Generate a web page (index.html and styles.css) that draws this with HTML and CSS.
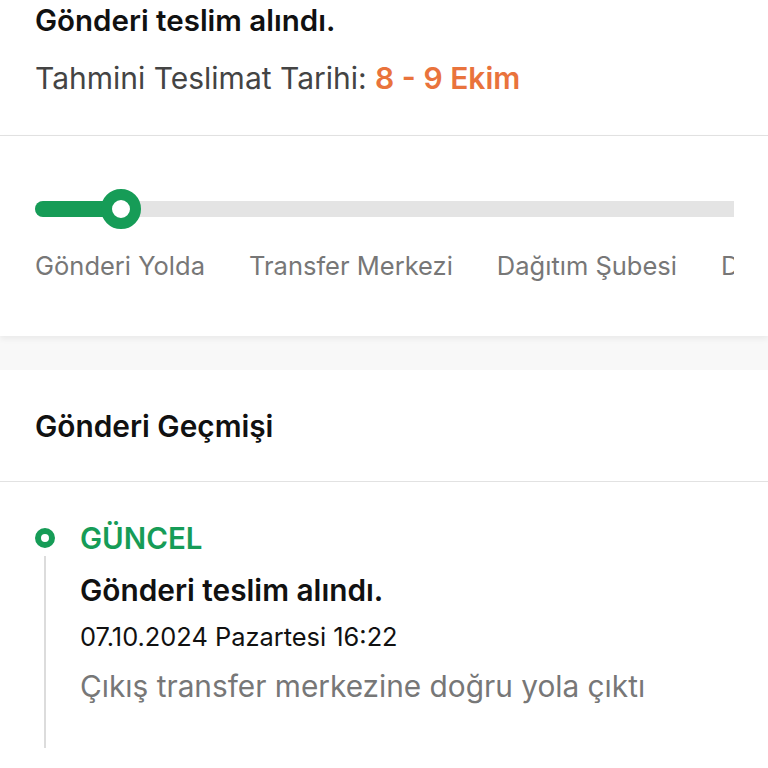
FILE: index.html
```html
<!DOCTYPE html>
<html lang="tr">
<head>
    <meta charset="UTF-8">
    <meta name="viewport" content="width=device-width, initial-scale=1.0">
    <title>Gönderi Takibi</title>
    <link rel="stylesheet" href="styles.css">
</head>
<body>
    <div class="page">
        <section class="summary">
            <h1>Gönderi teslim alındı.</h1>
            <p class="eta">Tahmini Teslimat Tarihi: <span class="eta-date">8 - 9 Ekim</span></p>
        </section>

        <section class="progress-card">
            <div class="track">
                <div class="track-fill"></div>
                <div class="track-knob"></div>
            </div>
            <div class="steps">
                <span>Gönderi Yolda</span>
                <span>Transfer Merkezi</span>
                <span>Dağıtım Şubesi</span>
                <span>Dağıtımda</span>
                <span>Teslim Edildi</span>
            </div>
        </section>

        <div class="gap"></div>

        <section class="history">
            <h2>Gönderi Geçmişi</h2>
            <ul class="timeline">
                <li class="event">
                    <div class="event-head">
                        <span class="dot"></span>
                        <span class="status">GÜNCEL</span>
                    </div>
                    <div class="event-body">
                        <p class="event-title">Gönderi teslim alındı.</p>
                        <p class="event-time">07.10.2024 Pazartesi 16:22</p>
                        <p class="event-desc">Çıkış transfer merkezine doğru yola çıktı</p>
                    </div>
                </li>
            </ul>
        </section>
    </div>
</body>
</html>
```

FILE: styles.css
```css
* {
    margin: 0;
    padding: 0;
    box-sizing: border-box;
}

body {
    font-family: Inter, "Noto Sans", sans-serif;
    background-color: #fff;
    color: #111;
    overflow: hidden;
}

.page {
    width: 768px;
}

.summary {
    padding: 0 35px 37px;
    border-bottom: 1px solid #e2e2e2;
}

h1 {
    font-size: 29.5px;
    font-weight: 600;
    line-height: 40px;
}

.eta {
    font-size: 30px;
    color: #444;
    margin-top: 18px;
    line-height: 40px;
}

.eta-date {
    color: #e9733c;
    font-weight: 600;
}

.progress-card {
    padding: 65px 34px 53px 35px;
    background: #fff;
    position: relative;
    z-index: 1;
    box-shadow: 0 3px 6px rgba(0, 0, 0, 0.06);
}

.track {
    position: relative;
    height: 16px;
    background: #e4e4e4;
    border-radius: 8px 0 0 8px;
}

.track-fill {
    width: 90px;
    height: 16px;
    background: #169c57;
    border-radius: 8px;
}

.track-knob {
    position: absolute;
    left: 66px;
    top: -12px;
    width: 40px;
    height: 40px;
    border-radius: 50%;
    background: #fff;
    border: 11px solid #169c57;
}

.steps {
    display: flex;
    gap: 44px;
    margin-top: 32px;
    overflow: hidden;
    white-space: nowrap;
    font-size: 25.5px;
    line-height: 34px;
    color: #777;
}

.gap {
    height: 34px;
    background: #f8f8f8;
}

.history h2 {
    font-size: 29.8px;
    font-weight: 600;
    line-height: 40px;
    padding: 36px 35px 35px;
    border-bottom: 1px solid #e2e2e2;
}

.timeline {
    list-style: none;
    padding: 38px 35px 0;
}

.event-head {
    display: flex;
    align-items: center;
    gap: 25px;
}

.dot {
    width: 20px;
    height: 20px;
    border-radius: 50%;
    border: 6px solid #169c57;
    background: #fff;
}

.status {
    font-size: 29.5px;
    font-weight: 600;
    color: #169c57;
    line-height: 36px;
}

.event-body {
    margin-left: 9px;
    border-left: 2px solid #dcdcdc;
    padding: 16px 0 44px 34px;
}

.event-title {
    font-size: 29.8px;
    font-weight: 600;
    line-height: 36px;
}

.event-time {
    font-size: 25.4px;
    line-height: 32px;
    margin-top: 13px;
}

.event-desc {
    font-size: 29.8px;
    line-height: 36px;
    color: #777;
    margin-top: 15px;
}
```
